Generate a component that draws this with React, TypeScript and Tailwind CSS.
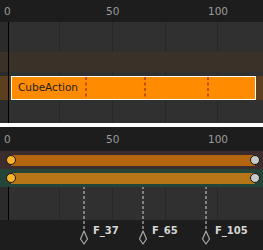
import React from "react"

// timeline canvas: frame 0 sits at x=8, grid every 25 frames
const gridX = ["left-[59px]", "left-[112px]", "left-[165px]", "left-[217px]"]

function Ruler({ h }: { h: string }) {
  return (
    <div className={`relative ${h} shrink-0 bg-[#1d1d1d] text-[10.5px] text-[#9c9c9c]`}>
      <span className="absolute left-[4px] top-1/2 -translate-y-1/2 leading-none">0</span>
      <span className="absolute left-[106px] top-1/2 -translate-y-1/2 leading-none">50</span>
      <span className="absolute left-[208px] top-1/2 -translate-y-1/2 leading-none">100</span>
    </div>
  )
}

function Grid() {
  return (
    <>
      <div aria-hidden className="absolute inset-y-0 left-0 w-[8px] bg-[#2b2b2b]" />
      {gridX.map((x) => (
        <div key={x} aria-hidden className={`absolute inset-y-0 ${x} w-px bg-[#272727]`} />
      ))}
    </>
  )
}

function StripMarker() {
  return (
    <svg width="2" height="22" className="block" viewBox="0 0 2 22">
      <line x1="1" y1="0" x2="1" y2="22" stroke="#bd540c" strokeWidth="2" strokeDasharray="3 2.5" />
    </svg>
  )
}

function MarkerIcon() {
  return (
    <svg width="10" height="15" viewBox="0 0 10 15" className="block">
      <path d="M5 1 L8.5 9 L5 14 L1.5 9 Z" fill="none" stroke="#a8a8a8" strokeWidth="1.2" strokeLinejoin="round" />
    </svg>
  )
}

function Track({ band, bar }: { band: string; bar: string }) {
  return (
    <div className={`relative z-10 flex h-[18px] items-center ${band}`}>
      <div className="relative ml-[11px] mr-[8px] h-[11px] flex-1">
        <div className={`h-full w-full ${bar}`} />
        <span className="absolute -left-[5px] top-1/2 h-[10px] w-[10px] -translate-y-1/2 rounded-full border border-[#151515] bg-[#f9b42c]" />
        <span className="absolute -right-[5px] top-1/2 h-[10px] w-[10px] -translate-y-1/2 rounded-full border border-[#151515] bg-[#c9c9c9]" />
      </div>
    </div>
  )
}

const markers = [
  { label: "F_37", x: "left-[79px]" },
  { label: "F_65", x: "left-[138px]" },
  { label: "F_105", x: "left-[201px]" },
]

export default function App() {
  return (
    <div className="flex h-[250px] w-[263px] flex-col overflow-hidden bg-[#1d1d1d] font-['DejaVu_Sans',sans-serif]">
      {/* NLA strip editor */}
      <Ruler h="h-[22px]" />
      <div className="relative h-[101px] shrink-0 bg-[#303030]">
        <Grid />
        <div className="relative z-10 flex flex-col pt-[30px]">
          <div className="h-[20px] bg-[#3a3229]" />
          <div className="mt-[4px] flex h-[24px] bg-[#5b3f20] pl-[11px] pr-[7px]">
            <div className="flex flex-1 items-center border border-white bg-[#ff8c00] pl-[6px] text-[10.5px] text-[#1c1c1c]">
              <span className="w-[67px]">CubeAction</span>
              <StripMarker />
              <span className="w-[57px]" />
              <StripMarker />
              <span className="w-[61px]" />
              <StripMarker />
            </div>
          </div>
        </div>
        <div aria-hidden className="absolute inset-y-0 left-[8px] z-20 w-px bg-black" />
      </div>

      <div className="h-[4px] shrink-0 bg-white" />

      {/* dope sheet */}
      <Ruler h="h-[24px]" />
      <div className="relative h-[69px] shrink-0 bg-[#303030]">
        <Grid />
        <div aria-hidden className="absolute inset-y-0 left-[8px] z-10 w-px bg-black" />
        <Track band="bg-[#3b2d2e]" bar="bg-[#b4650f]" />
        <Track band="bg-[#244438]" bar="bg-[#b67618]" />
      </div>

      <div className="relative flex-1 bg-[#1d1d1d]">
        {markers.map((m) => (
          <div key={m.label} className={`absolute top-[-69px] ${m.x} flex items-start`}>
            <div className="flex flex-col items-center">
              <svg width="10" height="79" viewBox="0 0 10 79" className="block">
                <line x1="5" y1="0" x2="5" y2="79" stroke="#d2d2d2" strokeWidth="1" strokeDasharray="3 2" />
              </svg>
              <MarkerIcon />
            </div>
            <span className="ml-[4px] mt-[75px] text-[10px] font-bold leading-none text-[#d6d6d6]">{m.label}</span>
          </div>
        ))}
      </div>
    </div>
  )
}
